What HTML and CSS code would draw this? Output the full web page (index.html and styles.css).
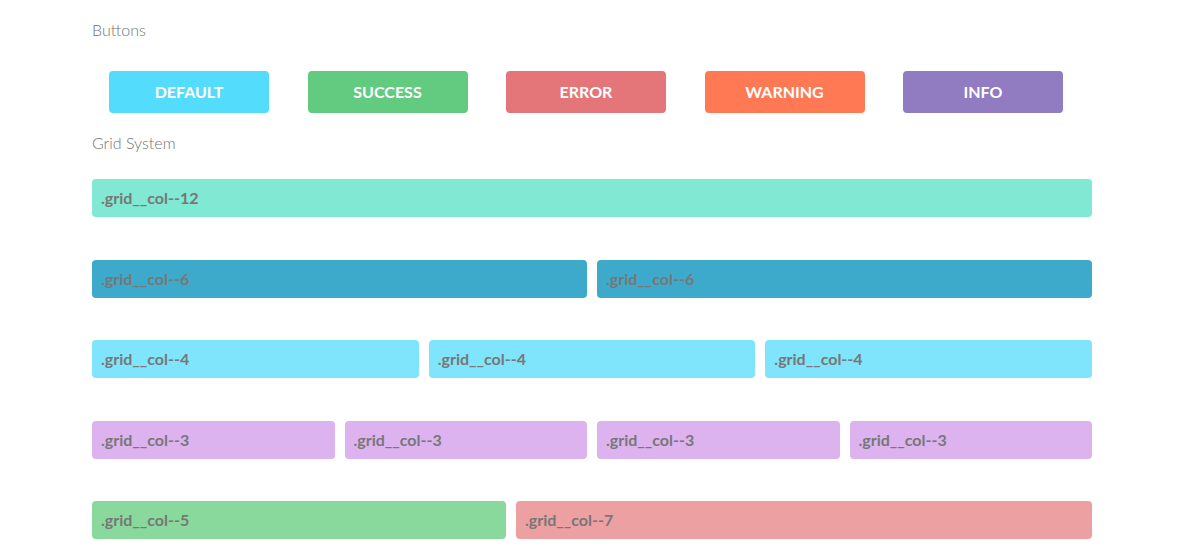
FILE: index.html
```html
<!DOCTYPE html>
<html>
<head>
<meta charset="utf-8">
<link rel="stylesheet" href="styles.css">
</head>
<body>
<div class="page">
  <h2 class="section-title first">Buttons</h2>
  <div class="buttons">
    <button class="btn btn--default">DEFAULT</button>
    <button class="btn btn--success">SUCCESS</button>
    <button class="btn btn--error">ERROR</button>
    <button class="btn btn--warning">WARNING</button>
    <button class="btn btn--info">INFO</button>
  </div>
  <h2 class="section-title">Grid System</h2>
  <div class="grid">
    <div class="grid__row">
      <div class="grid__col c12">.grid__col--12</div>
    </div>
    <div class="grid__row">
      <div class="grid__col c6">.grid__col--6</div>
      <div class="grid__col c6">.grid__col--6</div>
    </div>
    <div class="grid__row">
      <div class="grid__col c4">.grid__col--4</div>
      <div class="grid__col c4">.grid__col--4</div>
      <div class="grid__col c4">.grid__col--4</div>
    </div>
    <div class="grid__row">
      <div class="grid__col c3">.grid__col--3</div>
      <div class="grid__col c3">.grid__col--3</div>
      <div class="grid__col c3">.grid__col--3</div>
      <div class="grid__col c3">.grid__col--3</div>
    </div>
    <div class="grid__row">
      <div class="grid__col c5">.grid__col--5</div>
      <div class="grid__col c7">.grid__col--7</div>
    </div>
  </div>
</div>
</body>
</html>
```
FILE: styles.css
```css
html, body {
  margin: 0;
  padding: 0;
  background: #ffffff;
}
body {
  font-family: Lato, "Open Sans", sans-serif;
}
.page {
  width: 1000px;
  margin-left: 92px;
}
.section-title {
  margin: 20px 0 0;
  font-size: 16px;
  line-height: 20px;
  font-weight: 300;
  color: #727272;
}
.buttons {
  display: flex;
  gap: 38.5px;
  padding-left: 17px;
  margin-top: 31px;
}
.btn {
  width: 160px;
  height: 42px;
  border: none;
  border-radius: 4px;
  color: #ffffff;
  font-family: Lato, "Open Sans", sans-serif;
  font-weight: 700;
  font-size: 16px;
  padding: 0 0 2px;
}
.btn--default { background: #53dcfc; }
.btn--success { background: #63cb80; }
.btn--error { background: #e4767a; }
.btn--warning { background: #ff7955; }
.btn--info { background: #917bc1; }
.grid {
  margin-top: 26px;
  display: flex;
  flex-direction: column;
  gap: 42.5px;
}
.grid__row {
  display: flex;
  gap: 10px;
}
.grid__col {
  height: 38px;
  border-radius: 4px;
  box-sizing: border-box;
  padding-left: 9px;
  padding-bottom: 1px;
  display: flex;
  align-items: center;
  font-size: 16px;
  font-weight: 700;
  color: #777777;
  min-width: 0;
}
.c12 { flex: 12 1 0; background: #80e8d3; }
.c6 { flex: 6 1 0; background: #3eaacb; }
.c4 { flex: 4 1 0; background: #7fe5fc; }
.c3 { flex: 3 1 0; background: #ddb3ef; }
.c5 { flex: 5 1 0; background: #89d99c; }
.c7 { flex: 7 1 0; background: #eca0a2; }
```
